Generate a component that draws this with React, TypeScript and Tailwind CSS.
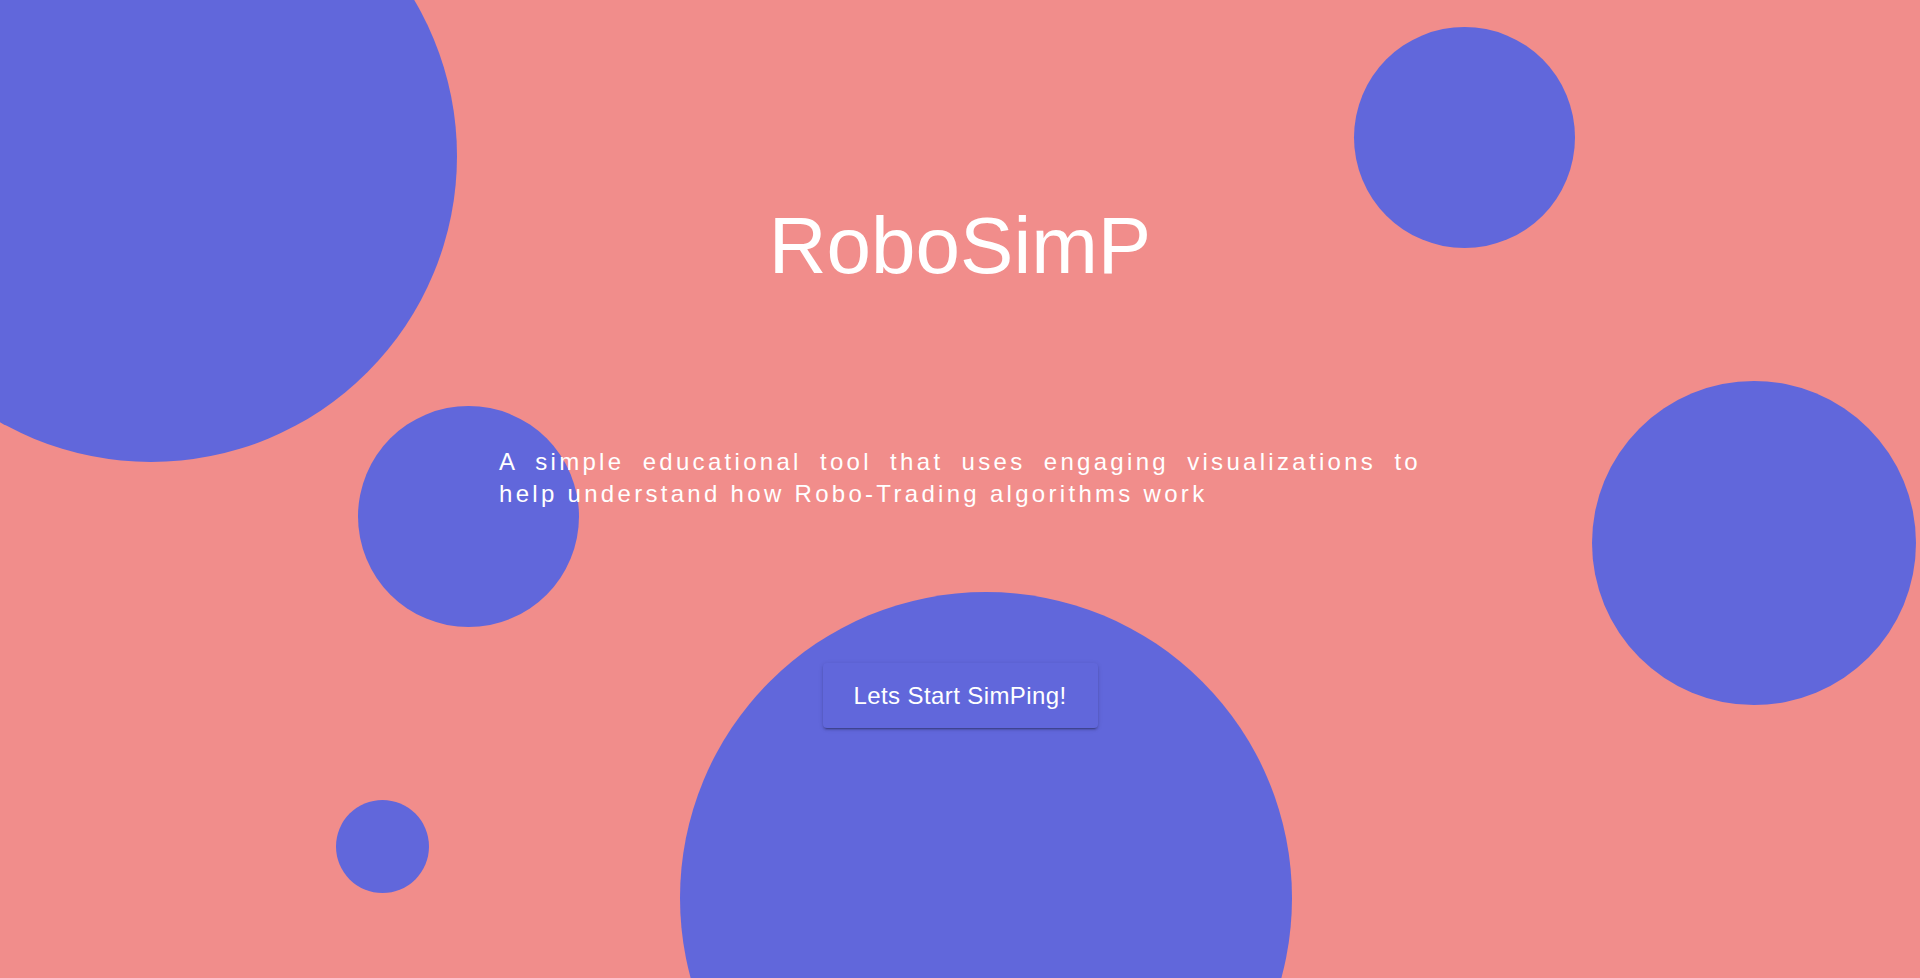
import React from 'react';

const bubbles = [
  'left-[-155px] top-[-150px] w-[612px] h-[612px]',
  'left-[1354px] top-[27px] w-[221px] h-[221px]',
  'left-[358px] top-[406px] w-[221px] h-[221px]',
  'left-[1592px] top-[381px] w-[324px] h-[324px]',
  'left-[336px] top-[800px] w-[93px] h-[93px]',
  'left-[680px] top-[592px] w-[612px] h-[612px]',
];

const App: React.FC = () => {
  return (
    <div className="relative h-screen w-full overflow-hidden bg-[#f18d8b] font-['Liberation_Sans',Arial,sans-serif] text-white">
      {/* background bubbles */}
      {bubbles.map((cls, i) => (
        <div key={i} className={`absolute rounded-full bg-[#6167db] ${cls}`} />
      ))}

      <div className="relative flex flex-col items-center pt-[206px]">
        <h1 className="text-[80px] leading-none font-normal">RoboSimP</h1>

        <p className="mt-[160px] w-[922px] text-justify text-[24px] leading-[32px] tracking-[3.3px]">
          A simple educational tool that uses engaging visualizations to help understand how Robo-Trading algorithms work
        </p>

        <button
          type="button"
          className="mt-[153px] flex h-[65px] w-[275px] items-center justify-center rounded bg-[#6167db] text-[24px] leading-6 tracking-[0.4px] text-white shadow-[0_3px_1px_-2px_rgba(0,0,0,0.2),0_2px_2px_0_rgba(0,0,0,0.14),0_1px_5px_0_rgba(0,0,0,0.12)]"
        >
          Lets Start SimPing!
        </button>
      </div>
    </div>
  );
};

export default App;
